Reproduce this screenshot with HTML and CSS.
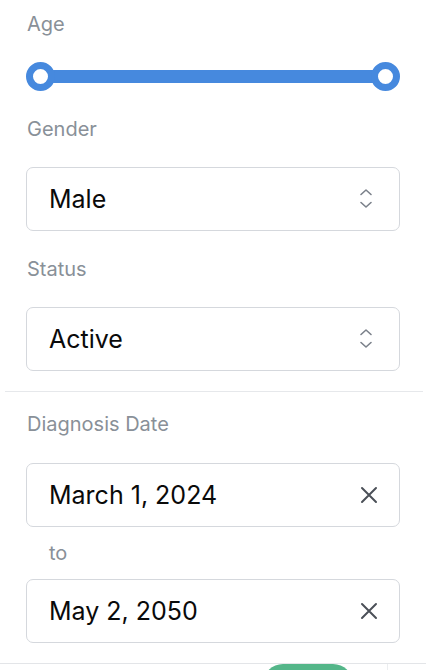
FILE: index.html
```html
<!DOCTYPE html>
<html lang="en">
<head>
<meta charset="utf-8">
<title>Filters</title>
<link rel="stylesheet" href="styles.css">
</head>
<body>
<div class="panel">
  <section class="section">
    <div class="field">
      <div class="label">Age</div>
      <div class="slider">
        <div class="track"></div>
        <span class="thumb thumb-left"></span>
        <span class="thumb thumb-right"></span>
      </div>
    </div>
    <div class="field">
      <div class="label">Gender</div>
      <div class="select">
        <span class="value">Male</span>
        <svg class="chev" width="14" height="22" viewBox="0 0 14 22" fill="none" stroke="#7b818a" stroke-width="1.6" stroke-linecap="round" stroke-linejoin="round"><path d="M2 6.5 L7 2 L12 6.5"/><path d="M2 14.5 L7 19 L12 14.5"/></svg>
      </div>
    </div>
    <div class="field">
      <div class="label">Status</div>
      <div class="select">
        <span class="value">Active</span>
        <svg class="chev" width="14" height="22" viewBox="0 0 14 22" fill="none" stroke="#7b818a" stroke-width="1.6" stroke-linecap="round" stroke-linejoin="round"><path d="M2 6.5 L7 2 L12 6.5"/><path d="M2 14.5 L7 19 L12 14.5"/></svg>
      </div>
    </div>
  </section>
  <hr class="divider">
  <section class="section section-date">
    <div class="label">Diagnosis Date</div>
    <div class="date-group">
      <div class="select date">
        <span class="value">March 1, 2024</span>
        <svg class="clear" width="18" height="18" viewBox="0 0 18 18" fill="none" stroke="#4b5058" stroke-width="2" stroke-linecap="round"><path d="M2 2 L16 16 M16 2 L2 16"/></svg>
      </div>
      <div class="to">to</div>
      <div class="select date">
        <span class="value">May 2, 2050</span>
        <svg class="clear" width="18" height="18" viewBox="0 0 18 18" fill="none" stroke="#4b5058" stroke-width="2" stroke-linecap="round"><path d="M2 2 L16 16 M16 2 L2 16"/></svg>
      </div>
    </div>
  </section>
</div>
<footer class="footer">
  <div class="footer-main">
    <div class="apply"></div>
  </div>
  <div class="footer-side"></div>
</footer>
</body>
</html>
```

FILE: styles.css
```css
* { box-sizing: border-box; }

html, body {
  margin: 0;
  padding: 0;
  background: #ffffff;
  overflow: hidden;
}

body {
  width: 426px;
  height: 670px;
  font-family: Inter, "Noto Sans", "Liberation Sans", sans-serif;
  color: #111111;
}

.panel {
  padding: 0 3px 0 5px;
}

.section {
  display: flex;
  flex-direction: column;
  gap: 26px;
  padding: 12px 23px 20px 21px;
}

.section-date {
  padding-top: 20px;
  gap: 27px;
}

.field {
  display: flex;
  flex-direction: column;
  gap: 26px;
}

.label {
  font-size: 20px;
  line-height: 24px;
  color: #899098;
  padding-left: 1px;
}

.slider {
  position: relative;
  height: 29px;
}

.track {
  position: absolute;
  left: 14px;
  right: 14px;
  top: 8px;
  height: 13px;
  background: #4689de;
}

.thumb {
  position: absolute;
  top: 0;
  width: 29px;
  height: 29px;
  border-radius: 50%;
  border: 7px solid #4689de;
  background: #ffffff;
}

.thumb-left { left: 0; }
.thumb-right { right: 0; }

.select {
  height: 64px;
  border: 1px solid #d5d8dd;
  border-radius: 7px;
  display: flex;
  align-items: center;
  justify-content: space-between;
  padding: 0 26px 0 22px;
}

.select.date {
  padding-right: 21px;
}

.value {
  font-size: 25px;
  color: #0a0a0a;
}

.date-group {
  display: flex;
  flex-direction: column;
  gap: 14px;
}

.to {
  font-size: 20px;
  line-height: 24px;
  color: #899098;
  padding-left: 23px;
}

.divider {
  border: 0;
  border-top: 1px solid #e6e8eb;
  margin: 0;
  height: 0;
}

.footer {
  display: flex;
  border-top: 1px solid #e3e5e8;
  height: 7px;
  overflow: hidden;
}

.footer-main {
  width: 387px;
  display: flex;
  justify-content: flex-end;
  padding-right: 34px;
}

.apply {
  width: 90px;
  height: 40px;
  flex: none;
  background: #54b689;
  border-radius: 20px;
}

.footer-side {
  flex: 1;
  border-left: 1px solid #eceef0;
}
```
